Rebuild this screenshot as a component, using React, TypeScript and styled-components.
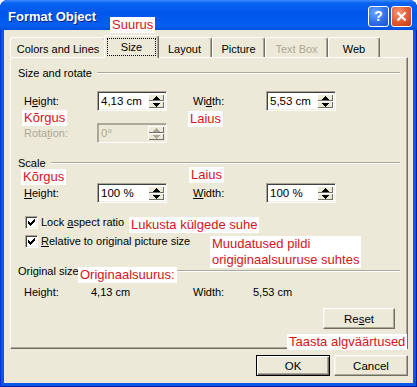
import styled, { createGlobalStyle } from "styled-components";

const GlobalStyle = createGlobalStyle`
  html, body {
    margin: 0;
    padding: 0;
    background: #fff;
    overflow: hidden;
  }
  body {
    font-family: "Liberation Sans", Arial, sans-serif;
    font-size: 11px;
    color: #000;
  }
`;

const Window = styled.div`
  position: relative;
  width: 417px;
  height: 387px;
  display: flex;
  flex-direction: column;
  background: #0758e6;
  border-radius: 8px 8px 0 0;
  box-shadow: inset 1px 0 0 #0831d9, inset -1px 0 0 #001ea0, inset 0 -1px 0 #001ea0;
`;

const TitleBar = styled.div`
  height: 30px;
  display: flex;
  align-items: center;
  padding: 2px 5px 0 8px;
  box-sizing: border-box;
  border-radius: 8px 8px 0 0;
  background: linear-gradient(
    to bottom,
    #3a8cff 0%,
    #0a62f0 10%,
    #0056ea 45%,
    #055ef0 85%,
    #0050dc 100%
  );
`;

const Title = styled.div`
  flex: 1;
  color: #fff;
  font: bold 13px "Liberation Sans", Arial, sans-serif;
  text-shadow: 1px 1px 0 #0a1e80;
`;

const CaptionButtons = styled.div`
  display: flex;
  gap: 2px;
`;

const CaptionButton = styled.div<{ $close?: boolean }>`
  width: 21px;
  height: 21px;
  box-sizing: border-box;
  border: 1px solid #fff;
  border-radius: 3px;
  display: flex;
  align-items: center;
  justify-content: center;
  color: #fff;
  font: bold 14px "Liberation Sans", Arial, sans-serif;
  background: ${(p) =>
    p.$close
      ? "radial-gradient(circle at 35% 30%, #f39a7c 0%, #e0582e 55%, #c23a14 100%)"
      : "radial-gradient(circle at 35% 30%, #6fa9ff 0%, #2f6fe8 55%, #1a4fd0 100%)"};
`;

const Client = styled.div`
  flex: 1;
  margin: 0 4px 4px;
  padding: 5px 5px 0 6px;
  background: #ece9d8;
  display: flex;
  flex-direction: column;
`;

const TabStrip = styled.div`
  height: 22px;
  display: flex;
  align-items: flex-end;
  position: relative;
  z-index: 1;
`;

const Tab = styled.div<{ $w: number; $active?: boolean; $disabled?: boolean }>`
  width: ${(p) => (p.$active ? p.$w + 4 : p.$w)}px;
  height: ${(p) => (p.$active ? 23 : 20)}px;
  margin: ${(p) => (p.$active ? "0 -2px -1px" : "0")};
  position: relative;
  z-index: ${(p) => (p.$active ? 2 : 1)};
  box-sizing: border-box;
  display: flex;
  justify-content: center;
  padding-top: 4px;
  background: #ece9d8;
  border-top: 1px solid #fff;
  border-left: 1px solid #fff;
  border-right: 1px solid #716f64;
  border-radius: 3px 3px 0 0;
  box-shadow: inset -1px 0 0 #aca899;
  color: ${(p) => (p.$disabled ? "#aca899" : "#000")};
  line-height: 14px;
`;

const FocusText = styled.span`
  outline: 1px dotted #000;
  outline-offset: 1px;
  padding: 0 12px;
  height: 14px;
`;

const Panel = styled.div`
  height: 292px;
  box-sizing: border-box;
  border: 1px solid;
  border-color: #fff #716f64 #716f64 #fff;
  box-shadow: inset -1px -1px 0 #aca899;
  padding: 8px 7px 0 7px;
  display: flex;
  flex-direction: column;
`;

const GroupHeader = styled.div<{ $mt?: number }>`
  height: 14px;
  line-height: 14px;
  margin-top: ${(p) => p.$mt ?? 0}px;
  display: flex;
  align-items: center;

  &::after {
    content: "";
    flex: 1;
    margin-left: 5px;
    border-top: 1px solid #aca899;
    border-bottom: 1px solid #fff;
  }
`;

const FieldRow = styled.div<{ $mt: number }>`
  display: flex;
  align-items: center;
  margin-top: ${(p) => p.$mt}px;
  padding-left: 6px;
  gap: 26px;
`;

const Field = styled.div`
  display: flex;
  align-items: center;
`;

const Label = styled.span<{ $w: number; $disabled?: boolean }>`
  width: ${(p) => p.$w}px;
  color: ${(p) => (p.$disabled ? "#aca899" : "#000")};
`;

const Key = styled.u`
  text-decoration: underline;
  text-underline-offset: 1px;
`;

const SpinBox = styled.div<{ $disabled?: boolean }>`
  width: 70px;
  height: 20px;
  box-sizing: border-box;
  display: flex;
  align-items: stretch;
  border: 1px solid;
  border-color: #aca899 #fff #fff #aca899;
  box-shadow: ${(p) =>
    p.$disabled
      ? "inset 1px 1px 0 #aca899, inset -1px -1px 0 #ece9d8"
      : "inset 1px 1px 0 #404040, inset -1px -1px 0 #f1efe2"};
  background: ${(p) => (p.$disabled ? "#ece9d8" : "#fff")};
  padding: 2px;
`;

const SpinValue = styled.span<{ $disabled?: boolean }>`
  flex: 1;
  font-size: 11.5px;
  line-height: 14px;
  padding-left: 1px;
  color: ${(p) => (p.$disabled ? "#aca899" : "#000")};
`;

const SpinButtons = styled.div`
  width: 16px;
  display: flex;
  flex-direction: column;
`;

const SpinButton = styled.div<{ $disabled?: boolean }>`
  flex: 1;
  display: flex;
  align-items: center;
  justify-content: center;
  background: #ece9d8;
  box-shadow: inset 1px 1px 0 #fff, inset -1px -1px 0 #716f64;
`;

const CheckRow = styled.label<{ $mt: number }>`
  display: flex;
  align-items: center;
  height: 16px;
  margin-top: ${(p) => p.$mt}px;
  padding-left: 7px;
  gap: 3px;
`;

const CheckBox = styled.span`
  width: 13px;
  height: 13px;
  box-sizing: border-box;
  background: #fff;
  border: 1px solid;
  border-color: #aca899 #fff #fff #aca899;
  box-shadow: inset 1px 1px 0 #404040, inset -1px -1px 0 #f1efe2;
  display: flex;
  align-items: center;
  justify-content: center;
`;

const InfoRow = styled.div`
  display: grid;
  grid-template-columns: 67px 102px 60px auto;
  margin-top: 7px;
  padding-left: 6px;
  line-height: 14px;
`;

const PushButton = styled.button<{ $default?: boolean; $w: number }>`
  width: ${(p) => p.$w}px;
  height: 21px;
  padding: 0;
  font: 11.5px "Liberation Sans", Arial, sans-serif;
  color: #000;
  background: #ece9d8;
  border: 1px solid;
  border-color: ${(p) => (p.$default ? "#000" : "#fff #716f64 #716f64 #fff")};
  box-shadow: ${(p) =>
    p.$default
      ? "inset 1px 1px 0 #fff, inset -1px -1px 0 #716f64, inset -2px -2px 0 #aca899"
      : "inset -1px -1px 0 #aca899, inset 1px 1px 0 #f1efe2"};
`;

const ResetButton = styled(PushButton)`
  align-self: flex-end;
  margin: 9px 5px 0 0;
`;

const ButtonRow = styled.div`
  display: flex;
  justify-content: flex-end;
  gap: 4px;
  margin-top: 6px;
`;

const Note = styled.div<{ $x: number; $y: number }>`
  position: absolute;
  left: ${(p) => p.$x}px;
  top: ${(p) => p.$y}px;
  background: #fff;
  color: #d4141c;
  font: 13px/16px "Liberation Sans", Arial, sans-serif;
  padding: 0 2px;
  white-space: nowrap;
  z-index: 5;
`;

const Arrow = ({ up, disabled }: { up?: boolean; disabled?: boolean }) => (
  <svg width="7" height="4" viewBox="0 0 7 4" shapeRendering="crispEdges">
    <polygon
      points={up ? "3.5,0 7,4 0,4" : "0,0 7,0 3.5,4"}
      fill={disabled ? "#aca899" : "#000"}
    />
  </svg>
);

const Spin = ({ value, disabled }: { value: string; disabled?: boolean }) => (
  <SpinBox $disabled={disabled}>
    <SpinValue $disabled={disabled}>{value}</SpinValue>
    <SpinButtons>
      <SpinButton>
        <Arrow up disabled={disabled} />
      </SpinButton>
      <SpinButton>
        <Arrow disabled={disabled} />
      </SpinButton>
    </SpinButtons>
  </SpinBox>
);

const Check = () => (
  <CheckBox>
    <svg width="7" height="7" viewBox="0 0 7 7" shapeRendering="crispEdges">
      <path
        d="M6 0h1v3h-1v1h-1v1h-1v1h-1v1h-1v-1h-1v-1h-1v-3h1v1h1v1h1v-1h1v-1h1z"
        fill="#000"
      />
    </svg>
  </CheckBox>
);

const App = () => (
  <>
    <GlobalStyle />
    <Window>
      <TitleBar>
        <Title>Format Object</Title>
        <CaptionButtons>
          <CaptionButton>?</CaptionButton>
          <CaptionButton $close>
            <svg width="11" height="11" viewBox="0 0 11 11">
              <path d="M1.5 1.5l8 8M9.5 1.5l-8 8" stroke="#fff" strokeWidth="2.2" />
            </svg>
          </CaptionButton>
        </CaptionButtons>
      </TitleBar>

      <Client>
        <TabStrip>
          <Tab $w={96}>Colors and Lines</Tab>
          <Tab $w={51} $active>
            <FocusText>Size</FocusText>
          </Tab>
          <Tab $w={55}>Layout</Tab>
          <Tab $w={53}>Picture</Tab>
          <Tab $w={63} $disabled>
            Text Box
          </Tab>
          <Tab $w={52}>Web</Tab>
        </TabStrip>

        <Panel>
          <GroupHeader>Size and rotate</GroupHeader>
          <FieldRow $mt={11}>
            <Field>
              <Label $w={73}>
                H<Key>e</Key>ight:
              </Label>
              <Spin value="4,13 cm" />
            </Field>
            <Field>
              <Label $w={73}>
                Wi<Key>d</Key>th:
              </Label>
              <Spin value="5,53 cm" />
            </Field>
          </FieldRow>
          <FieldRow $mt={12}>
            <Field>
              <Label $w={73} $disabled>
                Rota<Key>t</Key>ion:
              </Label>
              <Spin value="0°" disabled />
            </Field>
          </FieldRow>

          <GroupHeader $mt={13}>Scale</GroupHeader>
          <FieldRow $mt={13}>
            <Field>
              <Label $w={73}>
                <Key>H</Key>eight:
              </Label>
              <Spin value="100 %" />
            </Field>
            <Field>
              <Label $w={73}>
                <Key>W</Key>idth:
              </Label>
              <Spin value="100 %" />
            </Field>
          </FieldRow>
          <CheckRow $mt={11}>
            <Check />
            <span>
              Lock <Key>a</Key>spect ratio
            </span>
          </CheckRow>
          <CheckRow $mt={3}>
            <Check />
            <span>
              <Key>R</Key>elative to original picture size
            </span>
          </CheckRow>

          <GroupHeader $mt={15}>Original size</GroupHeader>
          <InfoRow>
            <span>Height:</span>
            <span>4,13 cm</span>
            <span>Width:</span>
            <span>5,53 cm</span>
          </InfoRow>
          <ResetButton $w={72}>
            Re<Key>s</Key>et
          </ResetButton>
        </Panel>

        <ButtonRow>
          <PushButton $w={74} $default>
            OK
          </PushButton>
          <PushButton $w={74}>Cancel</PushButton>
        </ButtonRow>
      </Client>

      <Note $x={110} $y={17}>Suurus</Note>
      <Note $x={22} $y={110}>Kõrgus</Note>
      <Note $x={188} $y={111}>Laius</Note>
      <Note $x={21} $y={169}>Kõrgus</Note>
      <Note $x={189} $y={167}>Laius</Note>
      <Note $x={129} $y={217}>Lukusta külgede suhe</Note>
      <Note $x={210} $y={236}>
        Muudatused pildi
        <br />
        origiginaalsuuruse suhtes
      </Note>
      <Note $x={78} $y={267}>Originaalsuurus:</Note>
      <Note $x={287} $y={334}>Taasta algväärtused</Note>
    </Window>
  </>
);

export default App;
